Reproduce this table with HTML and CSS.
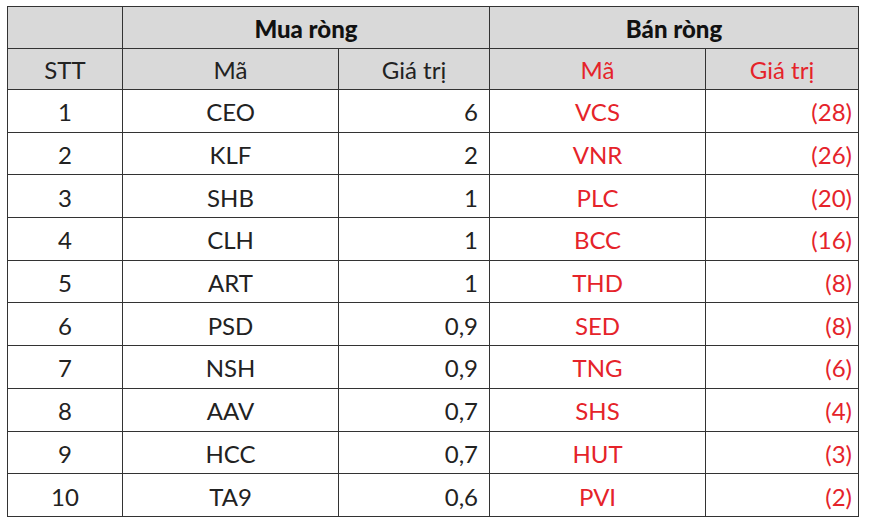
FILE: index.html
```html
<!DOCTYPE html>
<html lang="vi">
<head>
<meta charset="utf-8">
<link rel="stylesheet" href="styles.css">
</head>
<body>
<div class="wrap">
<table class="tbl">
  <colgroup>
    <col class="c1"><col class="c2"><col class="c3"><col class="c4"><col class="c5">
  </colgroup>
  <thead>
    <tr class="h1">
      <th></th>
      <th colspan="2" class="grp">Mua ròng</th>
      <th colspan="2" class="grp">Bán ròng</th>
    </tr>
    <tr class="h2">
      <th>STT</th>
      <th>Mã</th>
      <th>Giá trị</th>
      <th class="red">Mã</th>
      <th class="red">Giá trị</th>
    </tr>
  </thead>
  <tbody>
    <tr><td>1</td><td>CEO</td><td class="num">6</td><td class="red">VCS</td><td class="num2 red">(28)</td></tr>
    <tr><td>2</td><td>KLF</td><td class="num">2</td><td class="red">VNR</td><td class="num2 red">(26)</td></tr>
    <tr><td>3</td><td>SHB</td><td class="num">1</td><td class="red">PLC</td><td class="num2 red">(20)</td></tr>
    <tr><td>4</td><td>CLH</td><td class="num">1</td><td class="red">BCC</td><td class="num2 red">(16)</td></tr>
    <tr><td>5</td><td>ART</td><td class="num">1</td><td class="red">THD</td><td class="num2 red">(8)</td></tr>
    <tr><td>6</td><td>PSD</td><td class="num">0,9</td><td class="red">SED</td><td class="num2 red">(8)</td></tr>
    <tr><td>7</td><td>NSH</td><td class="num">0,9</td><td class="red">TNG</td><td class="num2 red">(6)</td></tr>
    <tr><td>8</td><td>AAV</td><td class="num">0,7</td><td class="red">SHS</td><td class="num2 red">(4)</td></tr>
    <tr><td>9</td><td>HCC</td><td class="num">0,7</td><td class="red">HUT</td><td class="num2 red">(3)</td></tr>
    <tr><td>10</td><td>TA9</td><td class="num">0,6</td><td class="red">PVI</td><td class="num2 red">(2)</td></tr>
  </tbody>
</table>
</div>
</body>
</html>
```

FILE: styles.css
```css
html, body {
  margin: 0;
  padding: 0;
  background: #ffffff;
}
.wrap {
  padding: 6px 0 0 7px;
}
.tbl {
  border-collapse: collapse;
  table-layout: fixed;
  width: 851px;
  font-family: Lato, "Open Sans", "Liberation Sans", sans-serif;
  font-size: 24px;
  line-height: 1;
  color: #222222;
}
.c1 { width: 115px; }
.c2 { width: 216px; }
.c3 { width: 151px; }
.c4 { width: 216px; }
.c5 { width: 153px; }
.tbl th, .tbl td {
  border: 1.5px solid #333333;
  padding: 3px 0 0 0;
  text-align: center;
  vertical-align: middle;
}
.tbl th {
  background: #d9d9d9;
  font-weight: normal;
  height: 37.5px;
}
.tbl th.grp {
  font-weight: 900;
  font-size: 24px;
  color: #111111;
}
.tbl td {
  height: 38.7px;
}
.tbl td.num {
  text-align: right;
  padding-right: 11px;
}
.tbl td.num2 {
  text-align: right;
  padding-right: 6px;
}
.red {
  color: #e5232a;
}
```
